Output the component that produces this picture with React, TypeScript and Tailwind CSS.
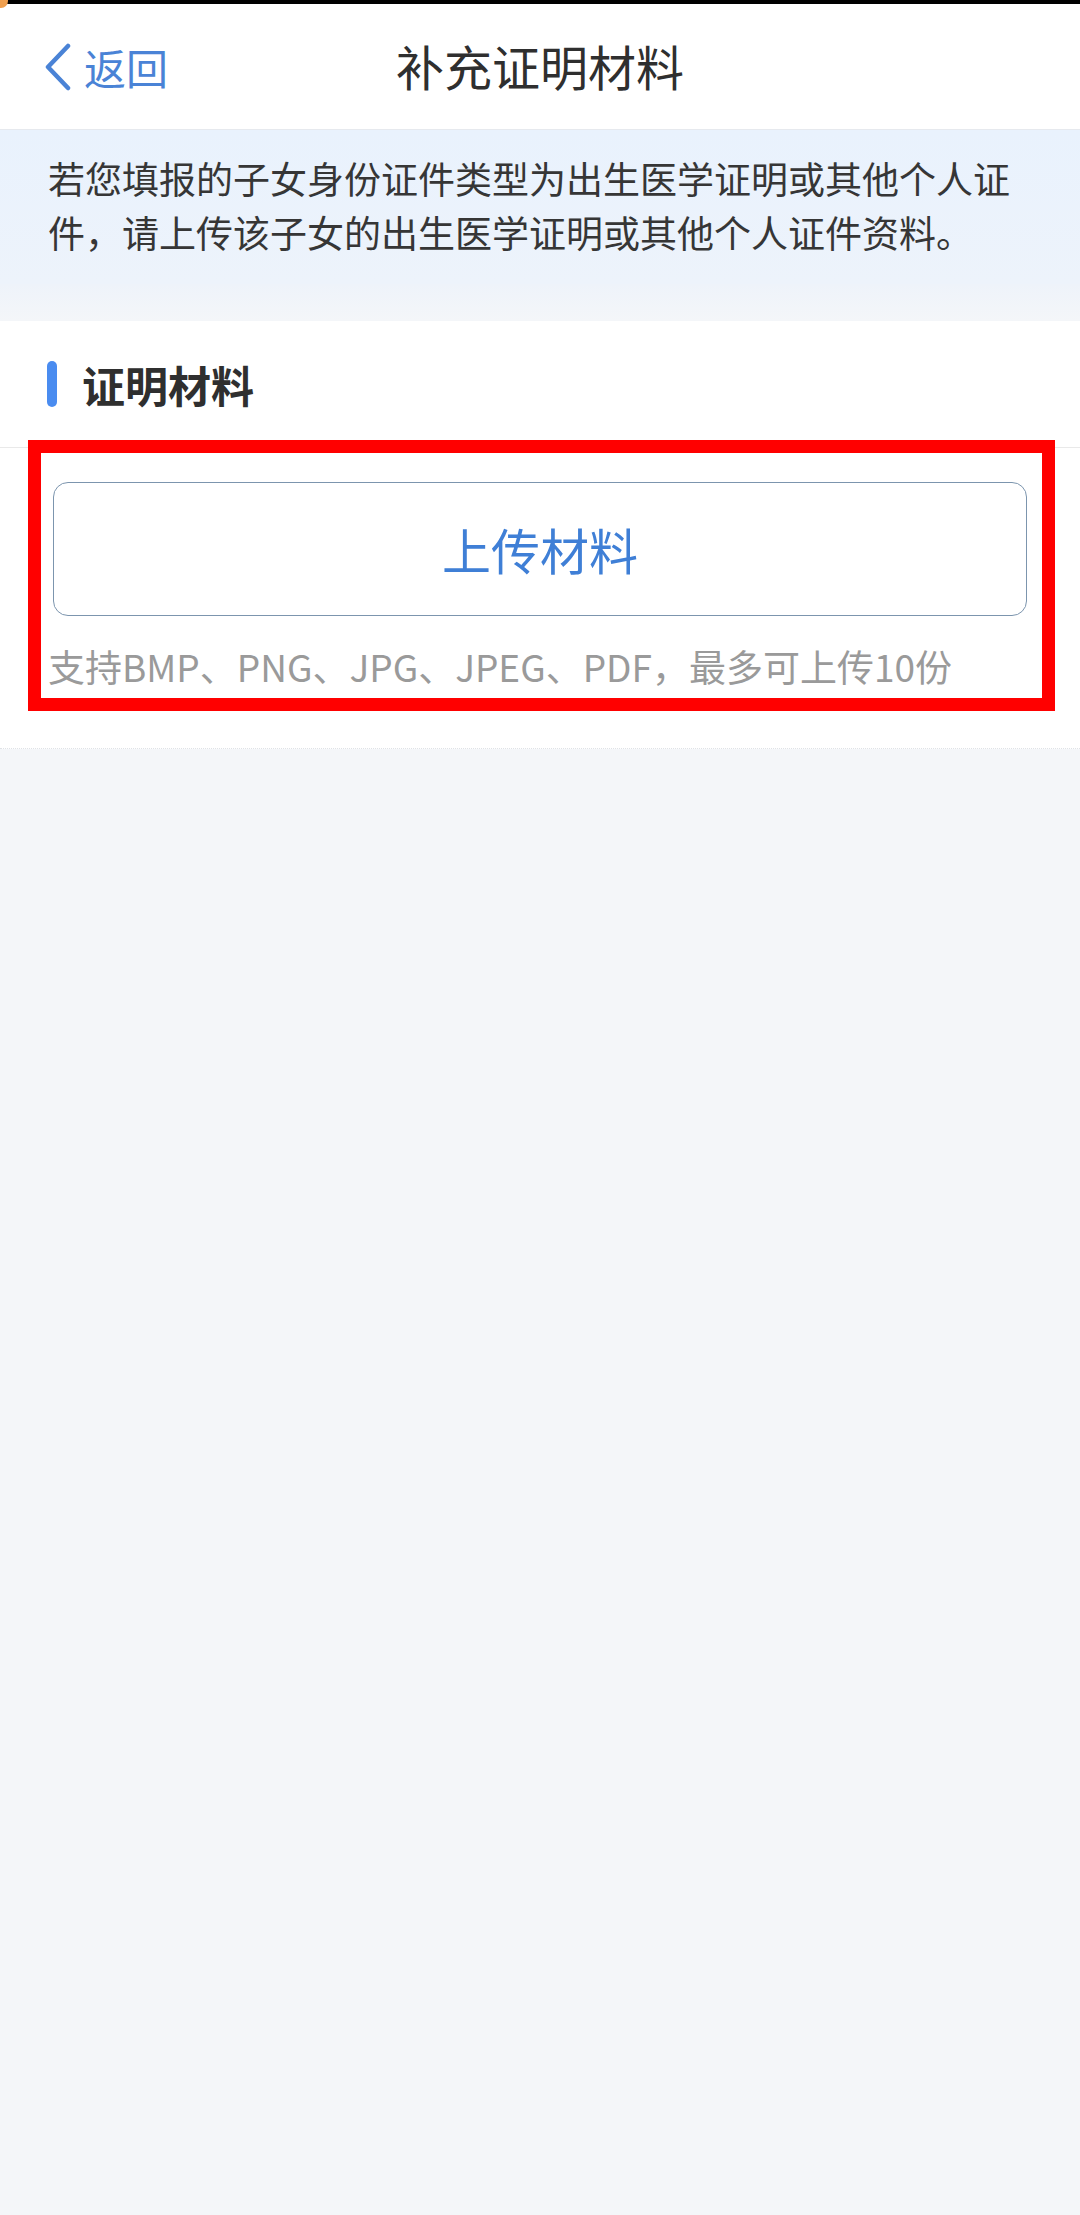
const font = "font-['Noto_Sans_CJK_SC','Noto_Sans',sans-serif]";

export default function App() {
  return (
    <div className={`${font} relative min-h-[2215px] w-[1080px] bg-[#f4f6f9]`}>
      {/* status bar remnant */}
      <div className="h-[4px] bg-black" />
      <div className="absolute left-[-6px] top-[-6px] h-[14px] w-[14px] rounded-full bg-[#f0a050]" />

      <header className="grid h-[126px] grid-cols-[1fr_auto_1fr] items-center border-b border-[#e6e9ee] bg-white">
        <button className="flex items-center gap-[12px] pl-[44px] text-[#4a83d6]">
          <svg width="28" height="48" viewBox="0 0 28 48" fill="none" stroke="currentColor" strokeWidth="4.5" strokeLinecap="round" strokeLinejoin="round">
            <polyline points="24,3 4,24 24,45" />
          </svg>
          <span className="text-[42px] leading-none">返回</span>
        </button>
        <h1 className="pb-[4px] text-[48px] font-normal leading-none text-[#2f2f2f]">补充证明材料</h1>
        <div />
      </header>

      <div className="bg-gradient-to-b from-[#e9f2fd] to-[#edf3fb] pb-[25px] pl-[48px] pr-[48px] pt-[21px] text-[37px] leading-[54px] text-[#363636]">
        若您填报的子女身份证件类型为出生医学证明或其他个人证件，请上传该子女的出生医学证明或其他个人证件资料。
      </div>
      <div className="h-[37px] bg-gradient-to-b from-[#eef3fa] to-[#f4f6f9]" />

      <section className="relative border-b border-dotted border-[#dfe2e6] bg-white">
        <div className="flex h-[127px] items-center gap-[25px] border-b border-[#e9e9e9] pl-[47px]">
          <span className="h-[46px] w-[10px] rounded-full bg-[#4a8cf0]" />
          <h2 className="text-[43px] font-bold leading-none text-[#2f2f2f]">证明材料</h2>
        </div>

        <div className="px-[53px] pt-[34px]">
          <button className="flex h-[134px] w-full items-center justify-center rounded-[15px] border-[1.5px] border-[#7c95ae] text-[49px] text-[#3f7fd6]">
            上传材料
          </button>
        </div>
        <p className="pb-[62px] pl-[48px] pt-[30px] text-[37px] leading-[40px] text-[#9a9a9a]">
          支持BMP、PNG、JPG、JPEG、PDF，最多可上传10份
        </p>

        {/* red annotation box */}
        <div className="pointer-events-none absolute left-[28px] top-[119px] h-[271px] w-[1027px] border-[13px] border-[#ff0000]" />
      </section>
    </div>
  );
}
